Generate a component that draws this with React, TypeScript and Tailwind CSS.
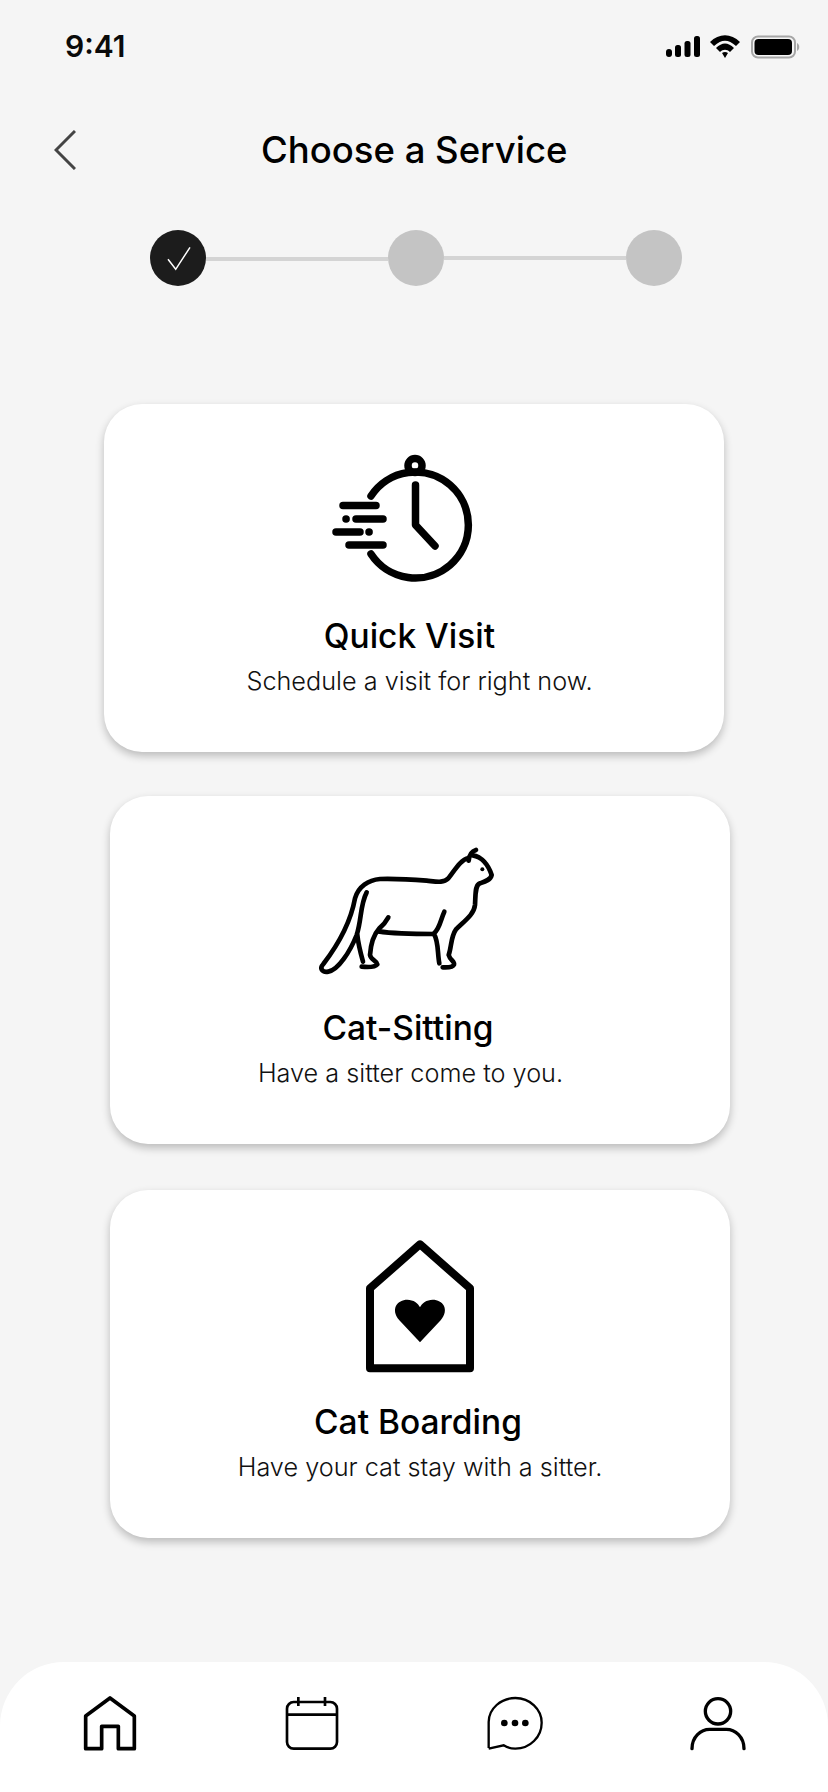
import type { ReactNode } from "react"

function ClockIcon() {
  return (
    <svg width="200" height="160" viewBox="0 0 200 160" fill="none" stroke="#000" strokeWidth="7.500" strokeLinecap="round" strokeLinejoin="round">
      <path d="M71 56A53 53 0 1 1 71 114" />
      <path d="M115.500 45V85L135 106" />
      <circle cx="115" cy="25.500" r="7" />
      <path d="M43 65.500H76M56 79H83M36 92H60M49 105H83M46 79H46.100M69 92H69.100" />
    </svg>
  )
}

function CatIcon() {
  return (
    <svg width="200" height="160" viewBox="0 0 600 480" fill="none" stroke="#000" strokeWidth="14" strokeLinecap="round" strokeLinejoin="round">
      <path d="M528 60C515 64 508 74 506 92M518 76C545 80 565 105 575 135C572 150 555 155 540 160C525 165 527 190 525 225C522 255 490 275 468 298C452 320 455 350 446 375C450 390 465 395 462 404C458 414 440 412 428 412" />
      <path d="M506 84C480 90 465 120 445 145C430 160 410 155 380 152C330 148 280 146 240 147C205 150 175 170 165 205C155 260 125 330 70 402C58 415 65 428 85 425C115 420 150 365 170 315C185 270 180 225 200 187" />
      <path d="M172 315C175 345 182 370 189 395M185 410C205 412 225 412 232 403C230 392 212 390 210 375C212 345 220 315 238 295C250 285 258 275 265 262" />
      <path d="M235 304C290 312 350 312 402 312M402 310C420 295 422 268 433 245M402 312C416 335 412 370 418 400" />
      <circle cx="547" cy="118" r="6" fill="#000" stroke="none" />
    </svg>
  )
}

function HouseIcon() {
  return (
    <svg width="140" height="160" viewBox="0 0 420 480" fill="none">
      <path d="M240 58L390 190V430H90V190Z" stroke="#000" strokeWidth="24" strokeLinejoin="round" />
      <path d="M240 352L178 286C150 252 172 224 202 224C220 224 235 235 240 247C245 235 260 224 278 224C308 224 330 252 302 286Z" fill="#000" />
    </svg>
  )
}

interface CardProps {
  icon: ReactNode
  title: string
  text: string
  iconClass: string
  titleClass: string
  textClass: string
  className: string
}

function Card({ icon, title, text, iconClass, titleClass, textClass, className }: CardProps) {
  return (
    <div className={`flex h-[348px] w-[620px] flex-col items-center rounded-[38px] bg-white shadow-[0_4px_8px_rgba(0,0,0,0.24)] ${className}`}>
      <div className={`h-[212px] w-full ${iconClass}`}>{icon}</div>
      <h2 className={`text-[33.500px] leading-[40px] font-[550] text-black ${titleClass}`}>{title}</h2>
      <p className={`mt-[9px] text-[25.250px] leading-[32px] font-light text-[#111] ${textClass}`}>{text}</p>
    </div>
  )
}

function NavBar() {
  return (
    <div className="mt-auto flex h-[130px] justify-between rounded-t-[64px] bg-white pt-[31px] pr-[80px] pl-[80px]">
      <svg width="60" height="60" viewBox="30 23 180 180" fill="none" stroke="#000" strokeWidth="11" strokeLinejoin="round">
        <path d="M95 190H47V92L120 38L193 92V190H145V123H95Z" />
      </svg>
      <svg width="60" height="60" viewBox="636 23 180 180" fill="none" stroke="#000" strokeWidth="8">
        <rect x="648" y="50" width="150" height="140" rx="20" />
        <path d="M648 88H798M682 35V62M762 35V62" />
      </svg>
      <svg width="60" height="60" viewBox="27 23 180 180" fill="none" stroke="#000" strokeWidth="7">
        <path d="M38 188V110C38 70 75 38 118 38C162 38 197 72 197 112C197 155 162 190 118 190C105 190 92 186 83 180L38 190" />
        <g fill="#000" stroke="none">
          <circle cx="85" cy="113" r="10" />
          <circle cx="117" cy="113" r="10" />
          <circle cx="148" cy="113" r="10" />
        </g>
      </svg>
      <svg width="60" height="60" viewBox="640 23 180 180" fill="none" stroke="#000" strokeWidth="10" strokeLinecap="round">
        <circle cx="730" cy="78" r="38" />
        <path d="M652 190C652 155 678 132 705 132H755C782 132 808 155 808 190" />
      </svg>
    </div>
  )
}

export default function App() {
  return (
    <div className="flex h-[1792px] w-[828px] flex-col overflow-hidden bg-[#f5f5f5] font-['Inter',sans-serif]">
      <div className="flex h-[92px] items-center justify-between pr-[28px] pl-[65px]">
        <span className="text-[30px] font-semibold text-[#0a0a0a]">9:41</span>
        <svg width="134" height="25" viewBox="666 33 134 25">
          <rect x="666" y="48" width="6" height="8" rx="3" />
          <rect x="675" y="44" width="6" height="12" rx="2.500" />
          <rect x="684.500" y="40" width="6" height="16" rx="2.500" />
          <rect x="694" y="35" width="6" height="21" rx="2.500" />
          <path d="M710 41C719 32 731 32 740 41L736 45C728 38 722 38 714 45Z" />
          <path d="M716 47C722 41 728 41 734 47L730 51C727 48 723 48 720 51Z" />
          <path d="M722 52C724 50.500 726 50.500 728 52L725 57Z" />
          <rect x="752" y="35.500" width="43" height="21" rx="6" fill="none" stroke="#a6a6a6" strokeWidth="2" />
          <rect x="754.500" y="38" width="37.500" height="16" rx="4" />
          <path d="M797 42C800 43.500 800 48.500 797 50Z" fill="#a6a6a6" />
        </svg>
      </div>

      <div className="mt-[28px] flex h-[60px] items-center pl-[54px]">
        <svg width="22" height="40" viewBox="0 0 22 40" fill="none" stroke="#444" strokeWidth="3">
          <path d="M21 1L2 20L21 39" />
        </svg>
        <h1 className="ml-[185px] text-[36.500px] leading-[44px] font-[550] text-black">Choose a Service</h1>
      </div>

      <div className="mt-[50px] flex items-center pl-[150px]">
        <div className="h-14 w-14 rounded-full bg-[#1c1c1c]">
          <svg width="56" height="56" viewBox="0 0 56 56" fill="none" stroke="#fff" strokeWidth="1.500">
            <path d="M18 29.300L25.700 39.300L40 17.300" />
          </svg>
        </div>
        <div className="mt-[1px] h-[4px] w-[182px] bg-[#d4d4d4]" />
        <div className="h-14 w-14 rounded-full bg-[#c4c4c4]" />
        <div className="mb-[1px] h-[4px] w-[182px] bg-[#d4d4d4]" />
        <div className="h-14 w-14 rounded-full bg-[#c4c4c4]" />
      </div>

      <Card
        className="mt-[118px] ml-[104px]"
        icon={<ClockIcon />}
        iconClass="pt-[36px] pl-[196px]"
        title="Quick Visit"
        titleClass="mr-[9px]"
        text="Schedule a visit for right now."
        textClass="ml-[11px]"
      />
      <Card
        className="mt-[44px] ml-[110px]"
        icon={<CatIcon />}
        iconClass="pt-[34px] pl-[190px]"
        title="Cat-Sitting"
        titleClass="mr-[24px]"
        text="Have a sitter come to you."
        textClass="mr-[19px]"
      />
      <Card
        className="mt-[46px] ml-[110px]"
        icon={<HouseIcon />}
        iconClass="pt-[35px] pl-[230px]"
        title="Cat Boarding"
        titleClass="mr-[4px]"
        text="Have your cat stay with a sitter."
        textClass=""
      />

      <NavBar />
    </div>
  )
}
